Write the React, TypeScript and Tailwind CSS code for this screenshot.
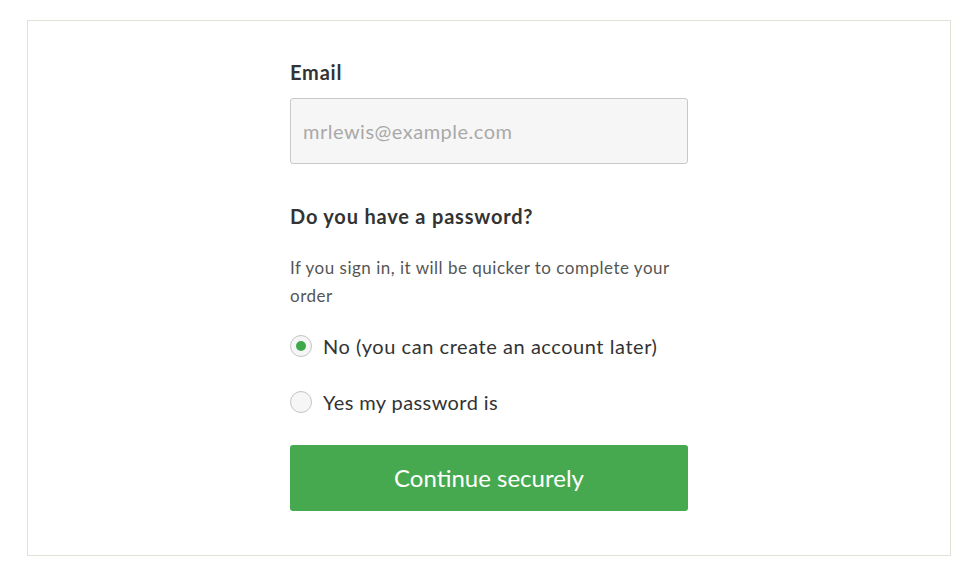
import React from "react";

const App: React.FC = () => {
  return (
    <div className="w-[975px] h-[575px] bg-white pt-[20px] pl-[27px] font-['Lato',sans-serif]">
      <div className="w-[924px] h-[536px] border border-[#e4e0da] flex justify-center">
        <form className="w-[398px] pt-[37px]">
          {/* Email */}
          <label className="block text-[20px] leading-[28px] font-bold text-[#333] tracking-[0.8px]">
            Email
          </label>
          <input
            type="email"
            placeholder="mrlewis@example.com"
            className="mt-[12px] block w-full h-[66px] rounded-[3px] border border-[#c8c8c8] bg-[#f6f6f6] px-[12px] text-[20px] tracking-[0.5px] text-[#333] placeholder:text-[#a9a9a9] outline-none"
          />

          {/* Password question */}
          <h3 className="mt-[38px] text-[20px] leading-[28px] font-bold text-[#333] tracking-[0.8px]">
            Do you have a password?
          </h3>
          <p className="mt-[24px] text-[17px] leading-[28px] text-[#555] tracking-[0.5px]">
            If you sign in, it will be quicker to complete your order
          </p>

          <div className="mt-[22px] flex flex-col gap-[28px]">
            <label className="flex items-center gap-[11px] h-[28px]">
              <span className="w-[22px] h-[22px] rounded-full border border-[#c4c4c4] bg-[#f6f6f6] flex items-center justify-center">
                <span className="w-[10px] h-[10px] rounded-full bg-[#3fa94a]" />
              </span>
              <span className="text-[20px] leading-[28px] text-[#333] tracking-[0.55px]">
                No (you can create an account later)
              </span>
            </label>
            <label className="flex items-center gap-[11px] h-[28px]">
              <span className="w-[22px] h-[22px] rounded-full border border-[#c4c4c4] bg-[#f6f6f6]" />
              <span className="text-[20px] leading-[28px] text-[#333] tracking-[0.4px]">
                Yes my password is
              </span>
            </label>
          </div>

          <button
            type="button"
            className="mt-[29px] w-full h-[66px] rounded-[3px] bg-[#47a94f] text-white text-[24px] font-normal"
          >
            Continue securely
          </button>
        </form>
      </div>
    </div>
  );
};

export default App;
